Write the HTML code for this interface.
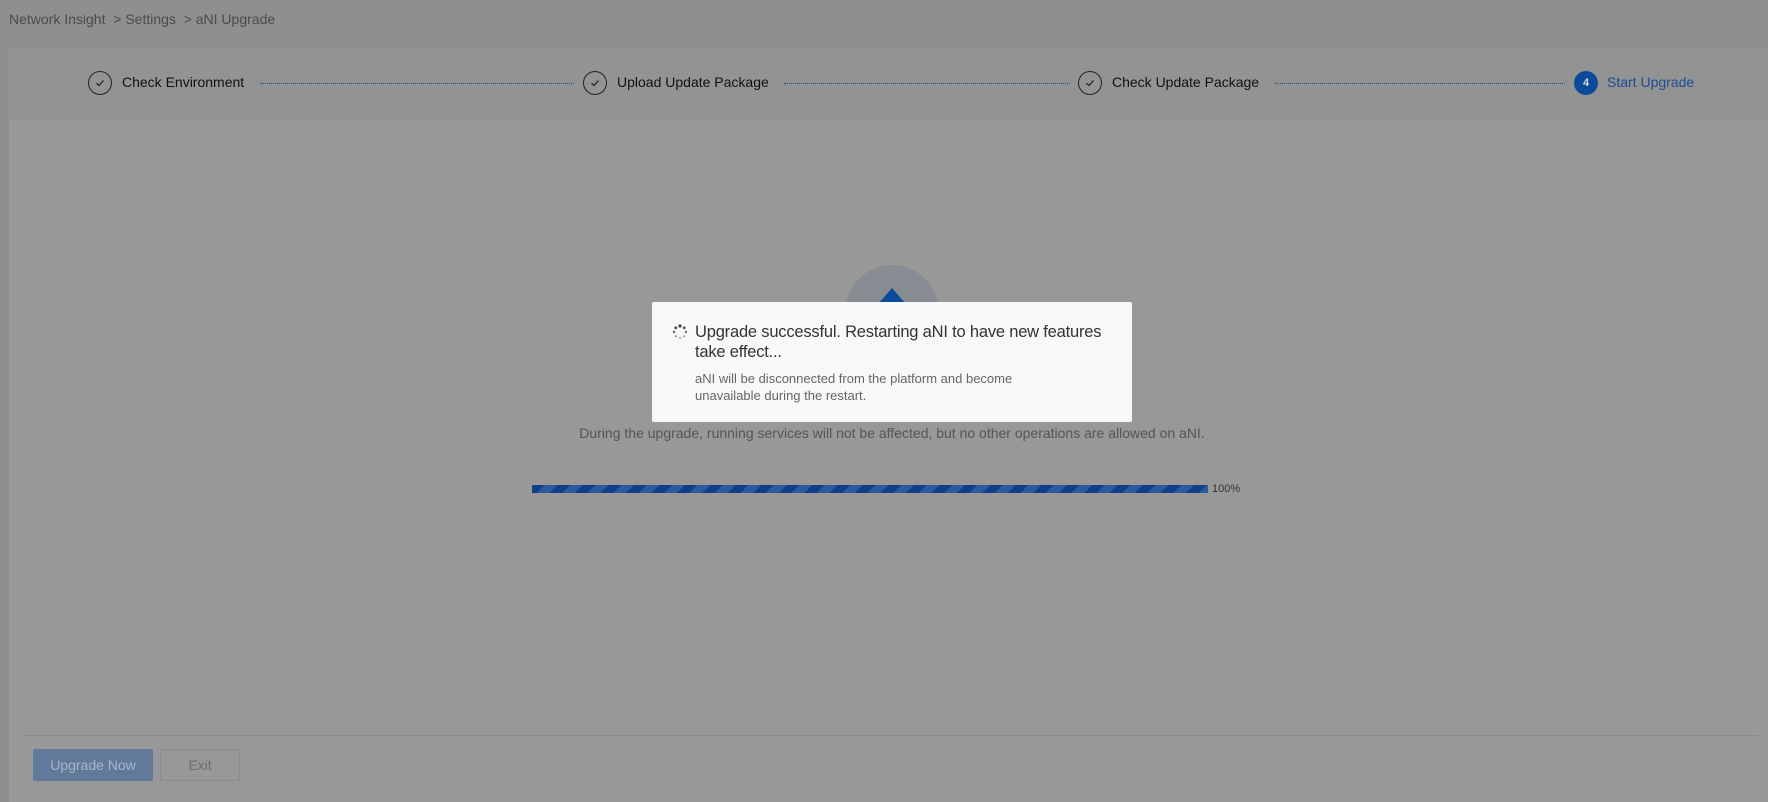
<!DOCTYPE html>
<html><head><meta charset="utf-8"><style>
*{margin:0;padding:0;box-sizing:border-box}
body{width:1768px;height:802px;overflow:hidden;background:#8e8f91;font-family:"Liberation Sans",Arial,sans-serif;position:relative}
.abs{position:absolute}
.crumb{left:9px;top:11px;font-size:14px;color:#4a4b4d}
.main{left:9px;top:48px;right:0;bottom:0;background:#989898}
.steps{left:9px;top:48px;right:0;height:72px;background:#939393}
.circ{width:24px;height:24px;border:1.3px solid #222;border-radius:50%;top:71px}
.circ svg{position:absolute;left:5px;top:5px}
.st{top:74px;font-size:14px;color:#111}
.ln{top:83px;height:0;border-top:1px dotted #1f4a8c}
.dlg{left:652px;top:302px;width:480px;height:120px;background:#f7f8fa;border-radius:2px}
</style></head><body>
<div class="abs crumb">Network Insight &nbsp;&gt; Settings &nbsp;&gt; aNI Upgrade</div>
<div class="abs main"></div>
<div class="abs steps"></div>

<div class="abs circ" style="left:88px"><svg width="12" height="12" viewBox="0 0 12 12"><path d="M2.5 6.2 L5 8.5 L9.5 3.5" fill="none" stroke="#222" stroke-width="1.3"/></svg></div>
<div class="abs st" style="left:122px">Check Environment</div>
<div class="abs ln" style="left:260px;width:314px"></div>

<div class="abs circ" style="left:583px"><svg width="12" height="12" viewBox="0 0 12 12"><path d="M2.5 6.2 L5 8.5 L9.5 3.5" fill="none" stroke="#222" stroke-width="1.3"/></svg></div>
<div class="abs st" style="left:617px">Upload Update Package</div>
<div class="abs ln" style="left:784px;width:286px"></div>

<div class="abs circ" style="left:1078px"><svg width="12" height="12" viewBox="0 0 12 12"><path d="M2.5 6.2 L5 8.5 L9.5 3.5" fill="none" stroke="#222" stroke-width="1.3"/></svg></div>
<div class="abs st" style="left:1112px">Check Update Package</div>
<div class="abs ln" style="left:1275px;width:290px"></div>

<div class="abs" style="left:1574px;top:71px;width:24px;height:24px;border-radius:50%;background:#0e4a9c;color:#ddd;font-size:11px;font-weight:bold;text-align:center;line-height:24px">4</div>
<div class="abs st" style="left:1607px;color:#1d4c94">Start Upgrade</div>

<div class="abs" style="left:845px;top:265px;width:94px;height:94px;border-radius:50%;background:#888c93"></div>
<div class="abs" style="left:878px;top:288px;width:0;height:0;border-left:14px solid transparent;border-right:14px solid transparent;border-bottom:16px solid #0e4a9c"></div>

<div class="abs" style="left:0;width:1784px;top:425px;text-align:center;font-size:14px;color:#555">During the upgrade, running services will not be affected, but no other operations are allowed on aNI.</div>

<div class="abs" style="left:532px;top:485px;width:676px;height:8px;background:repeating-linear-gradient(135deg,#0e3f88 0 9px,#2d5a9a 9px 18px)"></div>
<div class="abs" style="left:1212px;top:483px;font-size:11px;color:#333">100%</div>

<div class="abs" style="left:25px;top:735px;width:1733px;border-top:1px solid #8a8a8a"></div>
<div class="abs" style="left:33px;top:749px;width:120px;height:32px;background:#617a9a;border-radius:2px;color:#a9b6c7;font-size:14px;text-align:center;line-height:32px">Upgrade Now</div>
<div class="abs" style="left:160px;top:749px;width:80px;height:32px;border:1px solid #8c8c8c;border-radius:2px;color:#6e6e6e;font-size:14px;text-align:center;line-height:30px">Exit</div>

<div class="abs dlg">
  <svg class="abs" style="left:20px;top:22px" width="16" height="16" viewBox="0 0 16 16">
    <circle cx="8" cy="2" r="1.6" fill="#444"/><circle cx="12.2" cy="3.8" r="1.4" fill="#555"/><circle cx="14" cy="8" r="1.2" fill="#777"/><circle cx="12.2" cy="12.2" r="1" fill="#999"/><circle cx="8" cy="14" r="1" fill="#999"/><circle cx="3.8" cy="12.2" r="1" fill="#888"/><circle cx="2" cy="8" r="1.2" fill="#666"/><circle cx="3.8" cy="3.8" r="1.4" fill="#444"/>
  </svg>
  <div class="abs" style="left:43px;top:20px;width:430px;font-size:16.5px;line-height:20px;color:#333;letter-spacing:-0.2px">Upgrade successful. Restarting aNI to have new features take effect...</div>
  <div class="abs" style="left:43px;top:68px;width:350px;font-size:13px;line-height:17px;color:#666">aNI will be disconnected from the platform and become unavailable during the restart.</div>
</div>
</body></html>
